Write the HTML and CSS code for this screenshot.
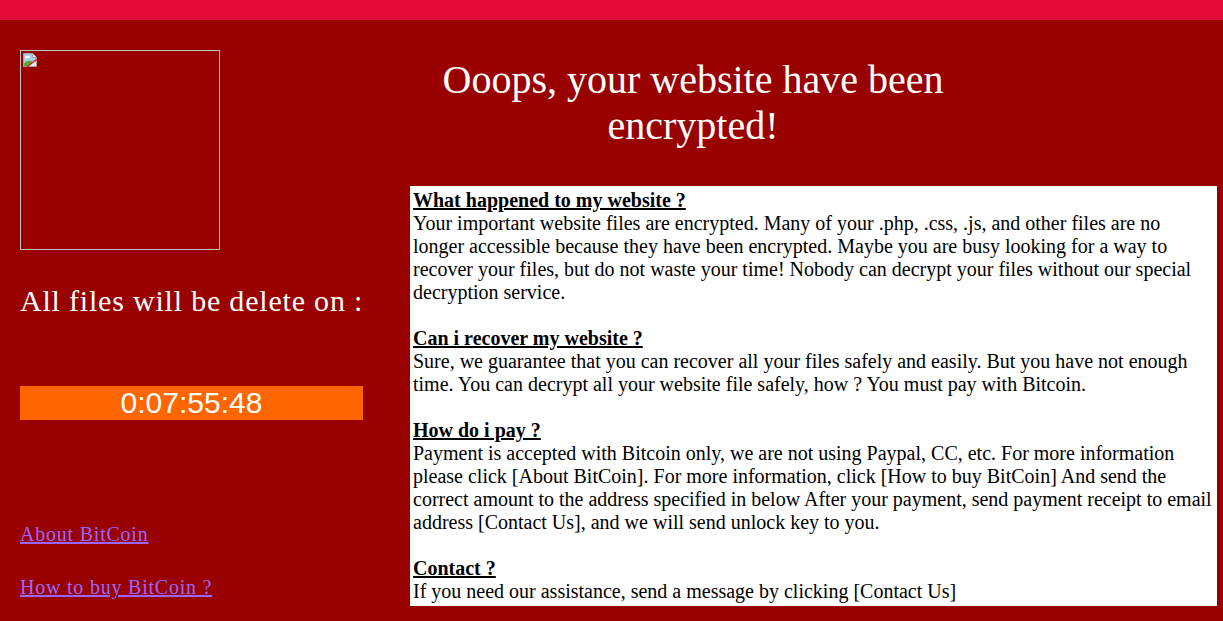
FILE: index.html
```html
<!DOCTYPE html>
<html>
<head>
<meta charset="utf-8">
<title>Ooops</title>
<link rel="stylesheet" href="styles.css">
</head>
<body>
<div class="topbar"></div>
<div class="main">
  <div class="left">
    <div class="imgbox">
      <svg class="broken" width="16" height="16" viewBox="0 0 16 16">
        <path d="M1.5 1.5 H10.5 L14.5 5.5 V14.5 H1.5 Z" fill="#e8eef4" stroke="#9aa4ae" stroke-width="1"/>
        <path d="M2 2 H10 V6 H14 V10 L2 10 Z" fill="#a9cdea"/>
        <path d="M10.5 1.5 V5.5 H14.5" fill="#ffffff" stroke="#9aa4ae" stroke-width="1"/>
        <ellipse cx="5.5" cy="5" rx="2.5" ry="1.2" fill="#ffffff"/>
        <path d="M2 11 Q6 7 11 10 L6 14 H2 Z" fill="#5aa83a"/>
        <path d="M5 15 L15 7" stroke="#d8282a" stroke-width="1.6"/>
      </svg>
    </div>
    <p class="delete">All files will be delete on :</p>
    <div class="timer">0:07:55:48</div>
    <a class="link first" href="#">About BitCoin</a>
    <a class="link" href="#">How to buy BitCoin ?</a>
  </div>
  <div class="right">
    <h1 class="title">Ooops, your website have been encrypted!</h1>
    <div class="note">
      <b class="q">What happened to my website ?</b><br>
      Your important website files are encrypted. Many of your .php, .css, .js, and other files are no longer accessible because they have been encrypted. Maybe you are busy looking for a way to recover your files, but do not waste your time! Nobody can decrypt your files without our special decryption service.<br><br>
      <b class="q">Can i recover my website ?</b><br>
      Sure, we guarantee that you can recover all your files safely and easily. But you have not enough time. You can decrypt all your website file safely, how ? You must pay with Bitcoin.<br><br>
      <b class="q">How do i pay ?</b><br>
      Payment is accepted with Bitcoin only, we are not using Paypal, CC, etc. For more information please click [About BitCoin]. For more information, click [How to buy BitCoin] And send the correct amount to the address specified in below After your payment, send payment receipt to email address [Contact Us], and we will send unlock key to you.<br><br>
      <b class="q">Contact ?</b><br>
      If you need our assistance, send a message by clicking [Contact Us]
    </div>
  </div>
</div>
</body>
</html>
```
FILE: styles.css
```css
html, body {
  margin: 0;
  padding: 0;
}
body {
  background: #990000;
  width: 1223px;
  height: 621px;
  overflow: hidden;
  font-family: "Liberation Serif", "Times New Roman", serif;
}
.topbar {
  height: 20px;
  background: #e20a37;
}
.main {
  display: flex;
  padding: 30px 6px 0 20px;
}
.left {
  width: 343px;
  flex: none;
  display: flex;
  flex-direction: column;
  align-items: flex-start;
}
.imgbox {
  width: 200px;
  height: 200px;
  box-sizing: border-box;
  border: 1px solid #c0c0c0;
  padding: 1px;
}
.broken {
  display: block;
}
.delete {
  margin: 34px 0 0;
  color: #ffffff;
  font-size: 30px;
  line-height: 34px;
  letter-spacing: 0.8px;
  white-space: nowrap;
}
.timer {
  margin-top: 68px;
  width: 343px;
  height: 34px;
  background: #ff6600;
  color: #ffffff;
  font-family: "Liberation Sans", Arial, sans-serif;
  font-size: 30px;
  line-height: 34px;
  text-align: center;
}
.link {
  color: #9966ff;
  text-decoration: underline;
  font-size: 20px;
  line-height: 23px;
  letter-spacing: 0.78px;
  margin-top: 30px;
}
.link.first {
  margin-top: 103px;
}
.right {
  flex: 1;
  display: flex;
  flex-direction: column;
  padding-left: 30px;
}
.title {
  width: 600px;
  margin: 7px 0 37px;
  font-weight: normal;
  font-size: 40px;
  line-height: 46px;
  text-align: center;
  color: #ffffff;
}
.note {
  margin-left: 17px;
  background: #ffffff;
  color: #000000;
  font-size: 20px;
  line-height: 23px;
  padding: 3px 4px 3px 3px;
}
.q {
  text-decoration: underline;
}
```
